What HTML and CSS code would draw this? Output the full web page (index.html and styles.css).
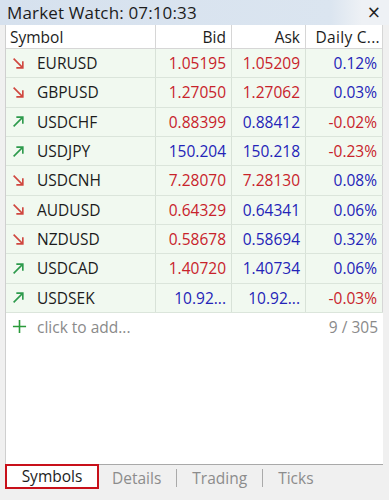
FILE: index.html
```html
<!DOCTYPE html>
<html>
<head>
<meta charset="utf-8">
<link rel="stylesheet" href="styles.css">
</head>
<body>
<div class="window">
  <div class="titlebar">
    <span class="title">Market Watch: 07:10:33</span>
    <span class="close">×</span>
  </div>
  <div class="panel">
    <div class="table">
      <div class="row head">
        <div class="c sym">Symbol</div>
        <div class="c num">Bid</div>
        <div class="c num">Ask</div>
        <div class="c num">Daily C...</div>
      </div>
      <div class="row">
        <div class="c sym"><svg class="arr down" viewBox="0 0 12 12"><path d="M1.5 1.5 L10 10 M10 4 V10 H4"/></svg>EURUSD</div>
        <div class="c num red">1.05195</div><div class="c num red">1.05209</div><div class="c num blue">0.12%</div>
      </div>
      <div class="row">
        <div class="c sym"><svg class="arr down" viewBox="0 0 12 12"><path d="M1.5 1.5 L10 10 M10 4 V10 H4"/></svg>GBPUSD</div>
        <div class="c num red">1.27050</div><div class="c num red">1.27062</div><div class="c num blue">0.03%</div>
      </div>
      <div class="row">
        <div class="c sym"><svg class="arr up" viewBox="0 0 12 12"><path d="M1.5 10.5 L10 2 M4 2 H10 V8"/></svg>USDCHF</div>
        <div class="c num red">0.88399</div><div class="c num blue">0.88412</div><div class="c num red">-0.02%</div>
      </div>
      <div class="row">
        <div class="c sym"><svg class="arr up" viewBox="0 0 12 12"><path d="M1.5 10.5 L10 2 M4 2 H10 V8"/></svg>USDJPY</div>
        <div class="c num blue">150.204</div><div class="c num blue">150.218</div><div class="c num red">-0.23%</div>
      </div>
      <div class="row">
        <div class="c sym"><svg class="arr down" viewBox="0 0 12 12"><path d="M1.5 1.5 L10 10 M10 4 V10 H4"/></svg>USDCNH</div>
        <div class="c num red">7.28070</div><div class="c num red">7.28130</div><div class="c num blue">0.08%</div>
      </div>
      <div class="row">
        <div class="c sym"><svg class="arr down" viewBox="0 0 12 12"><path d="M1.5 1.5 L10 10 M10 4 V10 H4"/></svg>AUDUSD</div>
        <div class="c num red">0.64329</div><div class="c num blue">0.64341</div><div class="c num blue">0.06%</div>
      </div>
      <div class="row">
        <div class="c sym"><svg class="arr down" viewBox="0 0 12 12"><path d="M1.5 1.5 L10 10 M10 4 V10 H4"/></svg>NZDUSD</div>
        <div class="c num red">0.58678</div><div class="c num blue">0.58694</div><div class="c num blue">0.32%</div>
      </div>
      <div class="row">
        <div class="c sym"><svg class="arr up" viewBox="0 0 12 12"><path d="M1.5 10.5 L10 2 M4 2 H10 V8"/></svg>USDCAD</div>
        <div class="c num red">1.40720</div><div class="c num blue">1.40734</div><div class="c num blue">0.06%</div>
      </div>
      <div class="row">
        <div class="c sym"><svg class="arr up" viewBox="0 0 12 12"><path d="M1.5 10.5 L10 2 M4 2 H10 V8"/></svg>USDSEK</div>
        <div class="c num blue">10.92...</div><div class="c num blue">10.92...</div><div class="c num red">-0.03%</div>
      </div>
      <div class="addrow">
        <span class="add"><svg class="plus" viewBox="0 0 16 16"><path d="M8 1 V15 M1 8 H15"/></svg>click to add...</span>
        <span class="count">9 / 305</span>
      </div>
    </div>
  </div>
  <div class="tabs">
    <div class="tab active">Symbols</div>
    <div class="tab first">Details</div>
    <div class="sep"></div>
    <div class="tab">Trading</div>
    <div class="sep"></div>
    <div class="tab">Ticks</div>
  </div>
</div>
</body>
</html>
```
FILE: styles.css
```css
html, body {
  margin: 0;
  padding: 0;
}
body {
  width: 389px;
  height: 500px;
  background: #f0f0f0;
  font-family: "Open Sans", "Noto Sans", sans-serif;
  overflow: hidden;
}
.window {
  display: flex;
  flex-direction: column;
  height: 500px;
}
.titlebar {
  height: 25px;
  display: flex;
  align-items: center;
  justify-content: space-between;
  background: linear-gradient(to right, #d6e1ee 0%, #dbe5f0 85%, #eef1f5 93%, #eef1f5 100%);
  padding: 0 8px 0 7px;
  box-sizing: border-box;
}
.title {
  font-size: 17px;
  color: #1c1c1c;
  letter-spacing: 0.15px;
}
.close {
  font-size: 17px;
  color: #222;
  font-family: "DejaVu Sans", sans-serif;
  line-height: 1;
}
.panel {
  margin-left: 5px;
  width: 378px;
  height: 440px;
  background: #fff;
  border-left: 1px solid #cfcfcf;
  border-bottom: 1px solid #a9a9a9;
  box-sizing: border-box;
}
.table {
  display: flex;
  flex-direction: column;
}
.row {
  display: grid;
  grid-template-columns: 150px 76px 74px 1fr;
  height: 29.33px;
  box-sizing: border-box;
  border-bottom: 1px solid #dbe5db;
  background: #f1f9f0;
  font-size: 15.5px;
}
.row.head {
  height: 24px;
  background: #fff;
  border-bottom: 1px solid #d6d6d6;
}
.c {
  display: flex;
  align-items: center;
  border-right: 1px solid #d8e2d8;
  padding: 0 5px;
  white-space: nowrap;
  overflow: hidden;
  color: #1c1c1c;
}
.row.head .c {
  border-right: 1px solid #d6d6d6;
}
.row.head .c:last-child {
  padding-right: 2px;
  letter-spacing: 0.3px;
}
.c:last-child {
  border-right: 1px solid #d6d6d6;
}
.sym {
  padding-left: 4px;
}
.row:not(.head) .sym {
  padding-left: 6px;
}
.num {
  justify-content: flex-end;
}
.red { color: #c8232b; }
.blue { color: #2424b8; }
.arr {
  width: 13px;
  height: 13px;
  margin-right: 12px;
  fill: none;
  stroke-width: 1.5;
}
.arr.down { stroke: #d0473f; }
.arr.up { stroke: #2d9a4c; }
.addrow {
  display: flex;
  justify-content: space-between;
  align-items: center;
  height: 28px;
  padding: 0 5px 0 6px;
  font-size: 15.5px;
  color: #8a8a8a;
}
.add {
  display: flex;
  align-items: center;
}
.plus {
  width: 15px;
  height: 15px;
  margin-right: 10px;
  stroke: #2a9a3a;
  stroke-width: 1.7;
  fill: none;
}
.tabs {
  display: flex;
  align-items: center;
  height: 25px;
  margin-left: 5px;
  font-size: 15.5px;
  color: #8c8c8c;
}
.tab {
  padding: 0 15px;
}
.tab.first {
  padding-left: 13px;
}
.tab.active {
  color: #1c1c1c;
  background: #fff;
  border: 2px solid #c8101a;
  height: 25px;
  box-sizing: border-box;
  display: flex;
  align-items: center;
  width: 94px;
  justify-content: center;
  margin-top: -3px;
  padding: 0;
}
.sep {
  width: 1px;
  height: 18px;
  background: #aaa;
}
```
